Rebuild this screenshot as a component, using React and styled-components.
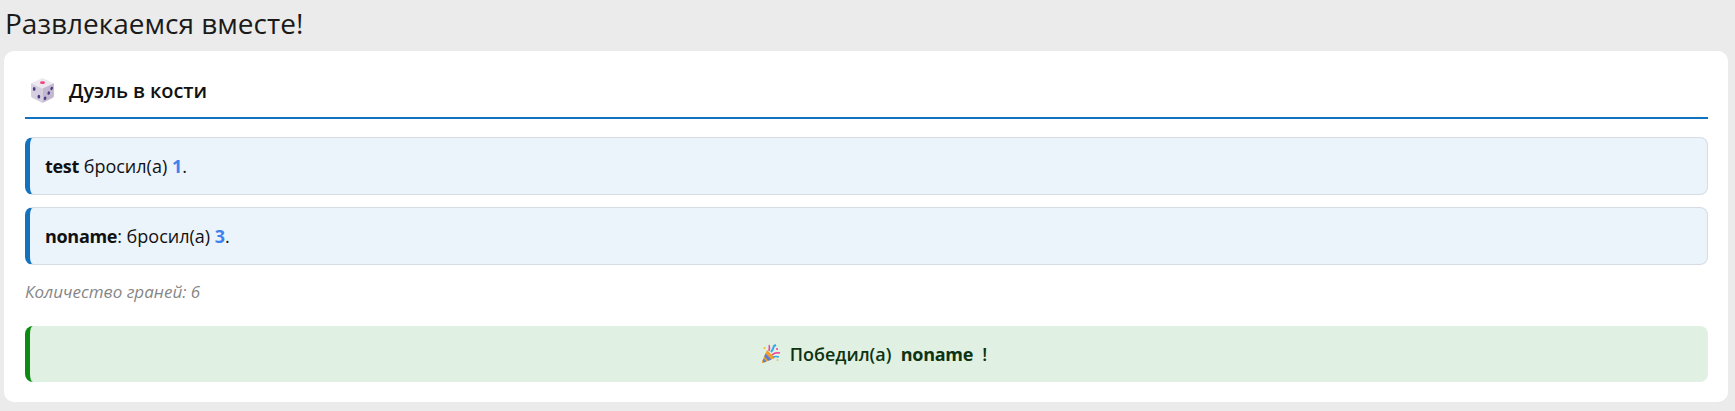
import React from "react";
import styled, { createGlobalStyle } from "styled-components";

const GlobalStyle = createGlobalStyle`
  html, body {
    margin: 0;
    padding: 0;
    background: #ebebeb;
    font-family: "Open Sans", "Noto Sans", sans-serif;
  }
`;

const Page = styled.div`
  padding: 0 7px 0 4px;
`;

const PageTitle = styled.h1`
  margin: 0;
  padding-left: 1px;
  height: 51px;
  line-height: 46px;
  font-size: 28px;
  font-weight: 400;
  color: #1a1a1a;
`;

const Card = styled.section`
  box-sizing: border-box;
  height: 351px;
  padding: 21px 20px 0 21px;
  background: #fff;
  border-radius: 10px;
`;

const CardHeader = styled.div`
  display: flex;
  align-items: center;
  gap: 13px;
  height: 36px;
  padding: 0 0 9px 4px;
  border-bottom: 2px solid #1272bd;
  margin-bottom: 18px;
`;

const CardTitle = styled.h2`
  margin: 0;
  font-size: 20px;
  font-weight: 600;
  letter-spacing: -0.1px;
  color: #111;
`;

const Roll = styled.div`
  box-sizing: border-box;
  display: flex;
  align-items: center;
  height: 58px;
  margin-bottom: 12px;
  padding-left: 15px;
  background: #ebf3fb;
  border: 1px solid #d5dce3;
  border-left: 5px solid #1272bd;
  border-radius: 8px;
  font-size: 18px;
  color: #111;
  white-space: pre;
`;

const Name = styled.strong`
  font-weight: 700;
  letter-spacing: -0.3px;
`;

const Value = styled.strong`
  font-weight: 700;
  color: #3f82ee;
`;

const Note = styled.p`
  margin: 0;
  height: 49px;
  line-height: 29px;
  font-size: 17px;
  font-style: italic;
  color: #868686;
`;

const Winner = styled.div`
  box-sizing: border-box;
  display: flex;
  align-items: center;
  justify-content: center;
  height: 56px;
  padding-left: 10px;
  background: #e0f0e2;
  border-left: 5px solid #0b8a12;
  border-radius: 8px;
  font-size: 18px;
  font-weight: 600;
  color: #0d3311;
  white-space: pre;
`;

const Popper = styled.svg`
  margin-right: 9px;
`;

const DiceIcon = () => (
  <svg width="27" height="27" viewBox="0 0 26 26">
    <path d="M13 1 L24 6 L13 11 L2 6 Z" fill="#ece8f0" />
    <path d="M2 6 L13 11 L13 25 L3 20 Q2 19.500 2 18 Z" fill="#d6cfe0" />
    <path d="M24 6 L13 11 L13 25 L23 20 Q24 19.500 24 18 Z" fill="#c2b8d0" />
    <ellipse cx="13" cy="5.500" rx="2.400" ry="1.300" fill="#f0417a" />
    <ellipse cx="5" cy="11.500" rx="1.300" ry="1.800" fill="#4a3a80" />
    <ellipse cx="9.500" cy="19" rx="1.300" ry="1.800" fill="#4a3a80" />
    <ellipse cx="15.500" cy="20.500" rx="1.200" ry="1.700" fill="#4a3a80" transform="rotate(20 15.500 20.500)" />
    <ellipse cx="19" cy="15.500" rx="1.200" ry="1.700" fill="#4a3a80" transform="rotate(20 19 15.500)" />
    <ellipse cx="21.800" cy="11" rx="1.200" ry="1.700" fill="#4a3a80" transform="rotate(20 21.800 11)" />
  </svg>
);

const PartyIcon = () => (
  <Popper width="20" height="20" viewBox="0 0 20 20">
    <path d="M6 6 L14 14 L2 19 Q0.500 19 1 17.500 Z" fill="#f0a02c" />
    <path d="M4.500 9.500 L10.500 15.500 L7.500 16.800 L3.200 12.500 Z" fill="#5b7fd6" />
    <path d="M2.500 14.500 L5.500 17.500 L3 18.500 L1.700 17 Z" fill="#5b7fd6" />
    <path d="M8 7 Q9 3 8 1" stroke="#f2409a" strokeWidth="1.500" fill="none" />
    <path d="M10 8 Q12 6 13 2 L15 1" stroke="#35a8e8" strokeWidth="2" fill="none" />
    <path d="M11 11 Q14 8 19 9" stroke="#f2409a" strokeWidth="1.500" fill="none" />
    <path d="M12 13 Q15 12 18 13" stroke="#35a8e8" strokeWidth="1.500" fill="none" />
    <circle cx="3.500" cy="4" r="1.100" fill="#f2c02c" />
    <circle cx="16" cy="5" r="1" fill="#f2409a" />
    <circle cx="16.500" cy="16" r="1" fill="#e8c060" />
  </Popper>
);

export default function App() {
  return (
    <Page>
      <GlobalStyle />
      <PageTitle>Развлекаемся вместе!</PageTitle>
      <Card>
        <CardHeader>
          <DiceIcon />
          <CardTitle>Дуэль в кости</CardTitle>
        </CardHeader>
        <Roll>
          <Name>test</Name> бросил(а) <Value>1</Value>.
        </Roll>
        <Roll>
          <Name>noname</Name>: бросил(а) <Value>3</Value>.
        </Roll>
        <Note>Количество граней: 6</Note>
        <Winner>
          <PartyIcon />
          Победил(а)  <Name>noname</Name>  !
        </Winner>
      </Card>
    </Page>
  );
}
